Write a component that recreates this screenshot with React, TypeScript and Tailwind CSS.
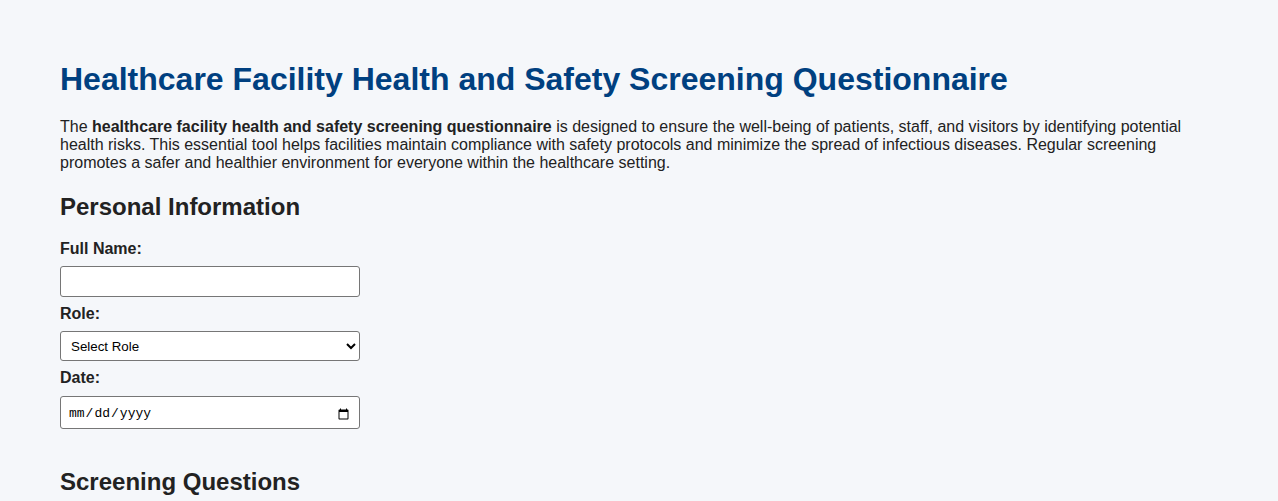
export default function App() {
  const roles = ["Select Role", "Patient", "Staff", "Visitor", "Contractor"];

  return (
    <div className="min-h-screen bg-[#f5f7fa] font-['Liberation_Sans',Arial,sans-serif] text-[#222]">
      <div className="px-[60px] pt-[61px] pb-10">
        <h1 className="text-[32px] leading-[37px] font-bold text-[#004080] mb-[20px]">
          Healthcare Facility Health and Safety Screening Questionnaire
        </h1>
        <p className="text-[16px] leading-[18px]">
          The <strong>healthcare facility health and safety screening questionnaire</strong> is designed to ensure the
          well-being of patients, staff, and visitors by identifying potential health risks. This essential tool helps
          facilities maintain compliance with safety protocols and minimize the spread of infectious diseases. Regular
          screening promotes a safer and healthier environment for everyone within the healthcare setting.
        </p>

        {/* Personal info */}
        <section className="mt-[21px]">
          <h2 className="text-[24px] leading-[28px] font-bold mb-[19px]">Personal Information</h2>

          <label htmlFor="fullName" className="block text-[16px] leading-[18px] font-bold mb-[8px]">
            Full Name:
          </label>
          <input
            id="fullName"
            type="text"
            className="block w-[300px] h-[31px] mb-[8px] px-2 bg-white border border-[#767676] rounded-[3px] text-[13px]"
          />

          <label htmlFor="role" className="block text-[16px] leading-[18px] font-bold mb-[8px]">
            Role:
          </label>
          <select
            id="role"
            defaultValue="Select Role"
            className="block w-[300px] h-[30px] mb-[8px] pl-[6px] bg-white border border-[#767676] rounded-[3px] text-[13.33px] text-black"
          >
            {roles.map((r) => (
              <option key={r} value={r}>
                {r}
              </option>
            ))}
          </select>

          <label htmlFor="date" className="block text-[16px] leading-[18px] font-bold mb-[9px]">
            Date:
          </label>
          <input
            id="date"
            type="date"
            className="block w-[300px] h-[33px] px-[7px] pt-[3px] bg-white border border-[#767676] rounded-[3px] font-['Liberation_Mono',monospace] text-[13px] text-black"
          />
        </section>

        <section className="mt-[39px]">
          <h2 className="text-[24px] leading-[28px] font-bold mb-[20px]">Screening Questions</h2>
          <p className="text-[16px] leading-[18px]">
            Have you experienced any of the following symptoms in the past 14 days?
          </p>
        </section>
      </div>
    </div>
  );
}
